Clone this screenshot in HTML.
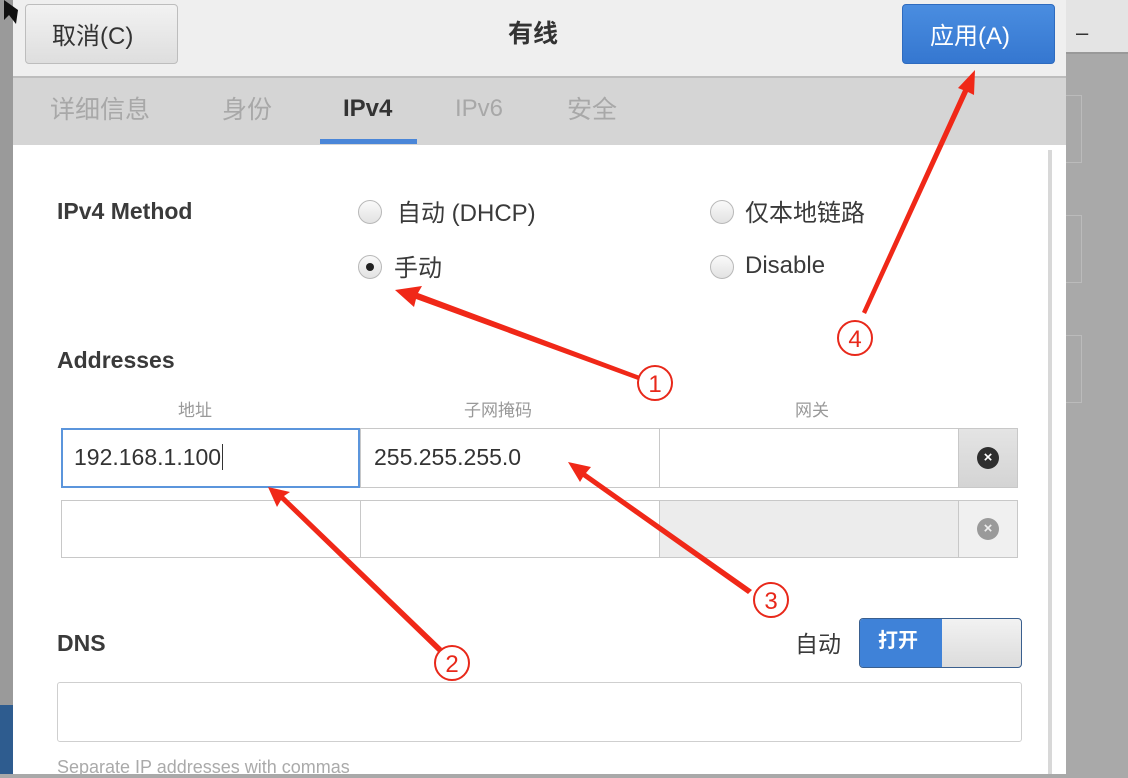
<!DOCTYPE html>
<html><head><meta charset="utf-8"><style>
*{margin:0;padding:0;box-sizing:border-box}
body{width:1128px;height:774px;overflow:hidden;position:relative;background:#a9a9a9;font-family:"Liberation Sans","Noto Sans CJK SC",sans-serif;color:#2e3436}
.a{position:absolute}
.t{position:absolute;white-space:nowrap}
.radio{position:absolute;width:24px;height:24px;border-radius:50%;border:1px solid #b8b8b8;background:linear-gradient(#fafafa,#e2e2e2)}
.cell{position:absolute;border:1px solid #c8c8c8;background:#fff}
</style></head><body>
<div class="a" style="left:1066px;top:0;width:62px;height:52px;background:#e4e4e4"></div>
<div class="a" style="left:1066px;top:52px;width:62px;height:2px;background:#999"></div>
<div class="t" style="left:1076px;top:20px;font-size:22px;color:#333">–</div>
<div class="a" style="left:1066px;top:95px;width:16px;height:68px;border:1px solid #bbb;border-left:none"></div>
<div class="a" style="left:1066px;top:215px;width:16px;height:68px;border:1px solid #bbb;border-left:none"></div>
<div class="a" style="left:1066px;top:335px;width:16px;height:68px;border:1px solid #bbb;border-left:none"></div>
<div class="a" style="left:0;top:0;width:13px;height:774px;background:#9a9a9a"></div>
<div class="a" style="left:0;top:705px;width:13px;height:69px;background:#2e5c8f"></div>
<!-- dialog -->
<div class="a" style="left:13px;top:0;width:1053px;height:774px;background:#fff"></div>
<div class="a" style="left:13px;top:0;width:1053px;height:78px;background:#efefef;border-bottom:2px solid #bdbdbd"></div>
<div class="a" style="left:13px;top:78px;width:1053px;height:67px;background:#d5d5d5"></div>
<div class="a" style="left:1048px;top:150px;width:4px;height:624px;background:#d8d8d8"></div>
<div class="a" style="left:25px;top:4px;width:153px;height:60px;border:1px solid #bdbdbd;border-radius:4px;background:linear-gradient(#f2f2f2,#dedede)"></div>
<div class="t" style="left:52px;top:16px;font-size:24px;color:#333">取消(C)</div>
<div class="t" style="left:508px;top:14px;font-size:25px;font-weight:bold;color:#333">有线</div>
<div class="a" style="left:902px;top:4px;width:153px;height:60px;border:1px solid #2e6bbf;border-radius:4px;background:linear-gradient(#4a8de0,#3577d0)"></div>
<div class="t" style="left:930px;top:16px;font-size:24px;color:#fff">应用(A)</div>
<div class="t" style="left:50px;top:90px;font-size:25px;color:#a8a8a8">详细信息</div>
<div class="t" style="left:222px;top:90px;font-size:25px;color:#a8a8a8">身份</div>
<div class="t" style="left:343px;top:95px;font-size:24px;color:#333;font-weight:bold">IPv4</div>
<div class="a" style="left:320px;top:139px;width:97px;height:5px;background:#4a86d8"></div>
<div class="t" style="left:455px;top:95px;font-size:24px;color:#a8a8a8">IPv6</div>
<div class="t" style="left:567px;top:90px;font-size:25px;color:#a8a8a8">安全</div>
<div class="t" style="left:57px;top:198px;font-size:23px;font-weight:bold;color:#3a3a3a">IPv4 Method</div>
<div class="radio" style="left:358px;top:200px"></div>
<div class="t" style="left:397px;top:193px;font-size:24px;color:#3a3a3a">自动 (DHCP)</div>
<div class="radio" style="left:358px;top:255px"></div>
<div class="a" style="left:366px;top:263px;width:8px;height:8px;border-radius:50%;background:#222"></div>
<div class="t" style="left:394px;top:248px;font-size:24px;color:#3a3a3a">手动</div>
<div class="radio" style="left:710px;top:200px"></div>
<div class="t" style="left:745px;top:193px;font-size:24px;color:#3a3a3a">仅本地链路</div>
<div class="radio" style="left:710px;top:255px"></div>
<div class="t" style="left:745px;top:252px;font-size:24px;color:#3a3a3a">Disable</div>
<div class="t" style="left:57px;top:347px;font-size:23px;font-weight:bold;color:#3a3a3a">Addresses</div>
<div class="t" style="left:178px;top:396px;font-size:17px;color:#999">地址</div>
<div class="t" style="left:464px;top:396px;font-size:17px;color:#999">子网掩码</div>
<div class="t" style="left:795px;top:396px;font-size:17px;color:#999">网关</div>
<div class="cell" style="left:360px;top:428px;width:300px;height:60px"></div>
<div class="cell" style="left:659px;top:428px;width:300px;height:60px"></div>
<div class="cell" style="left:958px;top:428px;width:60px;height:60px;background:linear-gradient(#e4e4e4,#d4d4d4)"></div>
<div class="a" style="left:61px;top:428px;width:299px;height:60px;border:2px solid #5b95dc;background:#fff"></div>
<div class="t" style="left:74px;top:444px;font-size:23px;color:#333">192.168.1.100<span style="border-left:1px solid #333;margin-left:1px"></span></div>
<div class="t" style="left:374px;top:444px;font-size:23px;color:#333">255.255.255.0</div>
<div class="a" style="left:977px;top:447px;width:22px;height:22px;border-radius:50%;background:#2e2e2e;color:#fff;font-size:15px;line-height:22px;text-align:center;font-weight:bold">×</div>
<div class="cell" style="left:61px;top:500px;width:300px;height:58px"></div>
<div class="cell" style="left:360px;top:500px;width:300px;height:58px"></div>
<div class="cell" style="left:659px;top:500px;width:300px;height:58px;background:#ececec"></div>
<div class="cell" style="left:958px;top:500px;width:60px;height:58px;background:#f0f0f0"></div>
<div class="a" style="left:977px;top:518px;width:22px;height:22px;border-radius:50%;background:#9a9a9a;color:#eee;font-size:15px;line-height:22px;text-align:center;font-weight:bold">×</div>
<div class="t" style="left:57px;top:630px;font-size:23px;font-weight:bold;color:#3a3a3a">DNS</div>
<div class="t" style="left:795px;top:625px;font-size:23px;color:#3a3a3a">自动</div>
<div class="a" style="left:859px;top:618px;width:163px;height:50px;border:1px solid #3a5f8e;border-radius:4px;background:linear-gradient(#f2f2f2,#dcdcdc);overflow:hidden">
<div style="width:82px;height:100%;background:#3f82d8;color:#fff;font-size:20px;font-weight:bold;line-height:44px;padding-left:18px">打开</div></div>
<div class="a" style="left:57px;top:682px;width:965px;height:60px;border:1px solid #cfcfcf;border-radius:3px;background:#fff"></div>
<div class="t" style="left:57px;top:757px;font-size:18px;color:#aaa">Separate IP addresses with commas</div>
<!-- cursor -->
<svg class="a" style="left:0;top:0" width="30" height="30"><path d="M4 0 L4 20 L9 15 L16 24 L18 10 Z" fill="#111"/></svg>
<!-- annotations -->
<svg class="a" style="left:0;top:0" width="1128" height="774">
<g fill="#f02818" stroke="none">
<path d="M640 376 L418 293 L422 286 L395 290 L414 307 L416 299 L638 380 Z"/>
<path d="M442 648 L284 496 L290 492 L268 487 L277 507 L281 500 L438 652 Z"/>
<path d="M752 590 L586 473 L591 467 L568 462 L580 482 L583 477 L748 594 Z"/>
<path d="M866 314 L968 92 L974 95 L975 70 L958 88 L963 90 L862 312 Z"/>
</g>
<g fill="none" stroke="#e8281a" stroke-width="2"><circle cx="655" cy="383" r="17"/><circle cx="452" cy="663" r="17"/><circle cx="771" cy="600" r="17"/><circle cx="855" cy="338" r="17"/></g>
<g fill="#e8281a" font-family="Liberation Sans,sans-serif" font-size="24" text-anchor="middle"><text x="655" y="392">1</text><text x="452" y="672">2</text><text x="771" y="609">3</text><text x="855" y="347">4</text></g>
</svg>
</body></html>
